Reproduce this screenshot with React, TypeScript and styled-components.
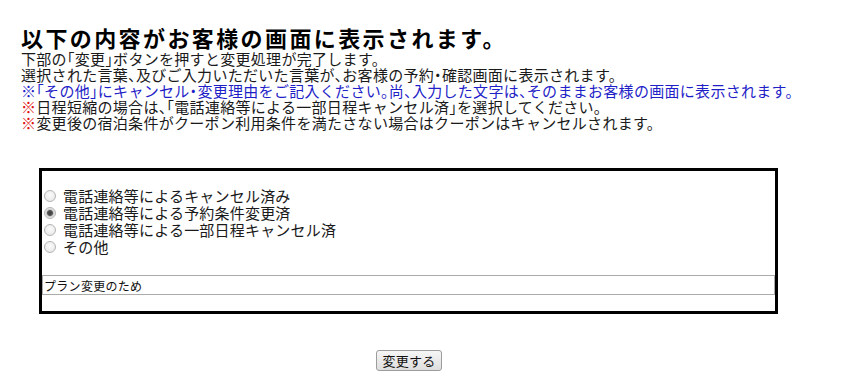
import React, { useState } from 'react';
import styled, { createGlobalStyle } from 'styled-components';

const GlobalStyle = createGlobalStyle`
  html, body {
    margin: 0;
    padding: 0;
    background: #fff;
  }
  body {
    font-family: "Noto Sans CJK JP", "Noto Sans", sans-serif;
    color: #111;
  }
`;

const options = [
  '電話連絡等によるキャンセル済み',
  '電話連絡等による予約条件変更済',
  '電話連絡等による一部日程キャンセル済',
  'その他',
];

export default function App() {
  const [selected, setSelected] = useState(1);
  const [reason, setReason] = useState('プラン変更のため');

  return (
    <>
      <GlobalStyle />
      <Page>
        <Heading>以下の内容がお客様の画面に表示されます。</Heading>
        <Notes>
          <Line>下部の「変更」ボタンを押すと変更処理が完了します。</Line>
          <Line>選択された言葉、及びご入力いただいた言葉が、お客様の予約・確認画面に表示されます。</Line>
          <Line $blue>※「その他」にキャンセル・変更理由をご記入ください。尚、入力した文字は、そのままお客様の画面に表示されます。</Line>
          <Line>
            <Mark>※</Mark>日程短縮の場合は、「電話連絡等による一部日程キャンセル済」を選択してください。
          </Line>
          <Line>
            <Mark>※</Mark>変更後の宿泊条件がクーポン利用条件を満たさない場合はクーポンはキャンセルされます。
          </Line>
        </Notes>

        <ReasonBox>
          <OptionList>
            {options.map((label, i) => (
              <OptionRow key={label}>
                <Radio
                  type="radio"
                  name="reason"
                  checked={selected === i}
                  onChange={() => setSelected(i)}
                />
                {label}
              </OptionRow>
            ))}
          </OptionList>
          <ReasonInput value={reason} onChange={(e) => setReason(e.target.value)} />
        </ReasonBox>

        <ButtonRow>
          <SubmitButton type="button">変更する</SubmitButton>
        </ButtonRow>
      </Page>
    </>
  );
}

const Page = styled.div`
  width: 776px;
  padding: 24px 0 0 21px;
`;

const Heading = styled.h1`
  margin: 0;
  font-size: 22px;
  font-weight: bold;
  line-height: 27px;
  letter-spacing: 2.4px;
  color: #000;
  white-space: nowrap;
`;

const Notes = styled.div`
  font-size: 15px;
  line-height: 16px;
  letter-spacing: 0.3px;
  font-feature-settings: "halt";
  white-space: nowrap;
`;

const Line = styled.div<{ $blue?: boolean }>`
  color: ${(p) => (p.$blue ? '#1f1fc8' : '#1a1a1a')};
`;

const Mark = styled.span`
  color: #e01010;
`;

const ReasonBox = styled.div`
  box-sizing: border-box;
  width: 739px;
  margin: 37px 0 0 18px;
  border: 3px solid #000;
  padding: 16px 0 16px;
`;

const OptionList = styled.div`
  display: flex;
  flex-direction: column;
  margin-bottom: 20px;
`;

const OptionRow = styled.label`
  display: flex;
  align-items: center;
  height: 17px;
  font-size: 15px;
  letter-spacing: 0.2px;
  color: #1a1a1a;
  white-space: nowrap;
`;

const Radio = styled.input`
  appearance: none;
  box-sizing: border-box;
  width: 12px;
  height: 12px;
  margin: 0 7px 0 2px;
  border-radius: 50%;
  border: 1px solid #b4b4b4;
  background: radial-gradient(circle at 50% 40%, #fbfbfb 0%, #e4e4e4 100%);
  flex-shrink: 0;

  &:checked {
    background: radial-gradient(circle, #3a3a3a 0, #555 2.5px, #c8c8c8 3.5px, #eee 5px);
  }
`;

const ReasonInput = styled.input`
  display: block;
  box-sizing: border-box;
  width: 733px;
  height: 20px;
  margin: 0;
  padding: 0 1px;
  border: 1px solid #ababab;
  font-family: "Noto Sans CJK JP", "Noto Sans", sans-serif;
  font-size: 12px;
  letter-spacing: 0.3px;
  color: #111;
  outline: none;
`;

const ButtonRow = styled.div`
  display: flex;
  justify-content: center;
  margin-top: 36px;
`;

const SubmitButton = styled.button`
  box-sizing: border-box;
  height: 21px;
  width: 66px;
  padding: 0;
  border: 1px solid #9c9c9c;
  border-radius: 3px;
  background: linear-gradient(#f6f6f6, #dedede);
  font-family: "Noto Sans CJK JP", "Noto Sans", sans-serif;
  font-size: 13px;
  line-height: 19px;
  color: #111;
  letter-spacing: 0.3px;
`;
